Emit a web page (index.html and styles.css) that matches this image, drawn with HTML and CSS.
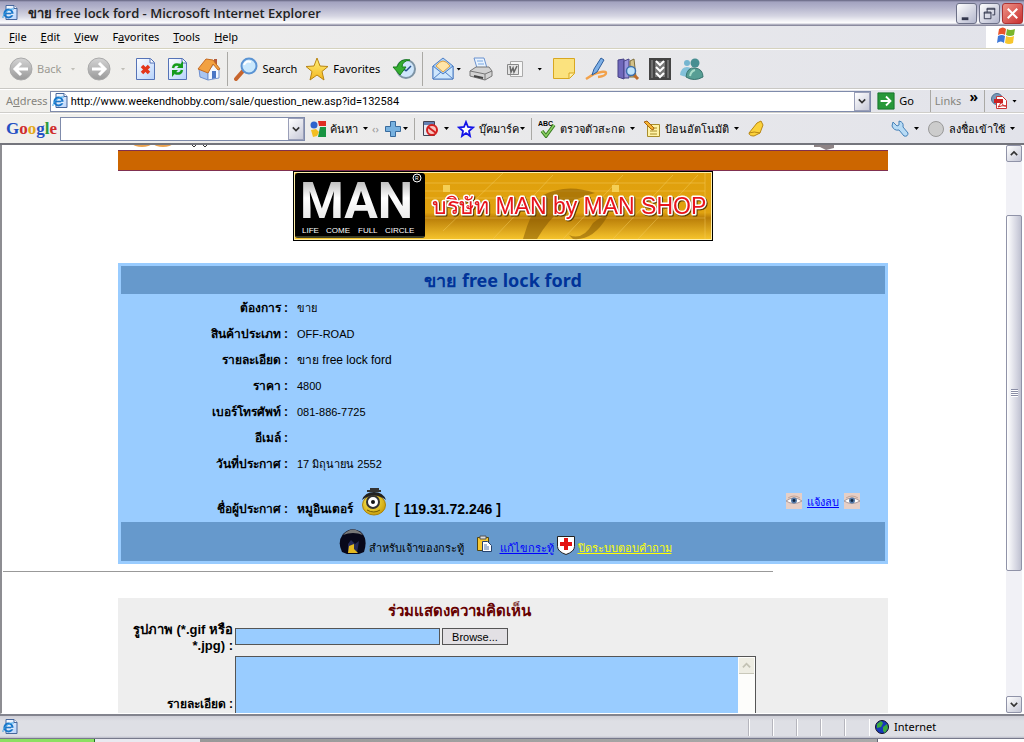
FILE: index.html
```html
<!DOCTYPE html>
<html lang="th">
<head>
<meta charset="utf-8">
<title>ขาย free lock ford</title>
<link rel="stylesheet" href="styles.css">
</head>
<body>
<svg class="defs" aria-hidden="true">
  <defs>
    <linearGradient id="gGrey" x1="0" y1="0" x2="0" y2="1"><stop offset="0" stop-color="#d4d4d4"/><stop offset="1" stop-color="#999"/></linearGradient>
    <linearGradient id="gPage" x1="0" y1="0" x2="1" y2="1"><stop offset="0" stop-color="#fff"/><stop offset="1" stop-color="#b5d2fb"/></linearGradient>
    <linearGradient id="gGold" x1="0" y1="0" x2="0" y2="1"><stop offset="0" stop-color="#fff27a"/><stop offset="1" stop-color="#f3b61e"/></linearGradient>
    <linearGradient id="gMetal" x1="0" y1="0" x2="0" y2="1"><stop offset="0" stop-color="#999"/><stop offset=".45" stop-color="#fff"/><stop offset="1" stop-color="#ddd"/></linearGradient>
    <linearGradient id="gAmber" x1="0" y1="0" x2="0" y2="1"><stop offset="0" stop-color="#e0a00c"/><stop offset=".6" stop-color="#e0a210"/><stop offset=".68" stop-color="#b97d08"/><stop offset="1" stop-color="#f5c32c"/></linearGradient>
    <radialGradient id="gBall" cx=".4" cy=".35" r=".7"><stop offset="0" stop-color="#fff35a"/><stop offset="1" stop-color="#c89b08"/></radialGradient>
    <symbol id="iePage" viewBox="0 0 16 16"><path d="M4 .5h8l3 3v11H4z" fill="url(#gPage)" stroke="#47679c"/><path d="M12 .5v3h3" fill="#fff" stroke="#47679c"/><circle cx="6.500" cy="8.500" r="4" fill="none" stroke="#1976c9" stroke-width="2.200"/><path d="M3 8.500h7" stroke="#1976c9" stroke-width="1.600"/><path d="M9 9.500h3" stroke="#dfecfc" stroke-width="1.500"/><path d="M1 13C0 10 7 3 12 4" fill="none" stroke="#39a3e8"/></symbol>
    <symbol id="eye" viewBox="0 0 16 16"><path d="M0 0h16v16H0z" fill="#e6cfc6"/><path d="M2 5Q8 1 14 5" fill="none" stroke="#c3a497"/><path d="M0 8Q8 2 16 8Q8 13 0 8" fill="#fff" stroke="#a9989a"/><circle cx="8" cy="7.500" r="3" fill="#557ba9"/><circle cx="8" cy="7.500" r="1.400" fill="#102540"/></symbol>
  </defs>
</svg>
<div class="window">
  <header class="titlebar">
    <svg class="i16" viewBox="0 0 16 16"><use href="#iePage"/></svg>
    <h1 class="caption">ขาย free lock ford - Microsoft Internet Explorer</h1>
    <button class="winbtn" aria-label="Minimize"><svg viewBox="0 0 20 20"><path d="M5 14h7v3H5z" fill="#34384e"/></svg></button>
    <button class="winbtn" aria-label="Restore"><svg viewBox="0 0 20 20"><path d="M7.500 9V4.500h8v7H13M7 5.500h9" fill="none" stroke="#34384e"/><path d="M4.500 8.500h7v7h-7zM4 9.500h8" fill="none" stroke="#34384e"/></svg></button>
    <button class="winbtn close" aria-label="Close"><svg viewBox="0 0 20 20"><path d="M5 5l10 10M15 5L5 15" stroke="#fff" stroke-width="2.200"/></svg></button>
  </header>
  <nav class="menubar">
    <div class="menus">
      <button><u>F</u>ile</button><button><u>E</u>dit</button><button><u>V</u>iew</button><button>F<u>a</u>vorites</button><button><u>T</u>ools</button><button><u>H</u>elp</button>
    </div>
    <div class="flag"><svg class="i20" viewBox="0 0 20 20"><path d="M3 3q4-3 7 0l-1 6q-3-2-7 0z" fill="#e8542a"/><path d="M11 3q3 2 8 0l-1 6q-4 2-8 0z" fill="#79b52c"/><path d="M2 10q4-2 7 0l-1 7q-3-3-7 0z" fill="#3d78d8"/><path d="M10 10q4 2 8 0l-1 7q-4 2-8 0z" fill="#f7c62b"/></svg></div>
  </nav>
  <div class="toolbar">
    <button class="tool dim"><svg class="i24" viewBox="0 0 24 24"><circle cx="12" cy="12" r="11" fill="url(#gGrey)" stroke="#aaa"/><path d="M19 12H7M12 6l-6 6 6 6" fill="none" stroke="#fff" stroke-width="3"/></svg>Back</button><i class="arrow pale"></i>
    <button class="tool dim s12" aria-label="Forward"><svg class="i24" viewBox="0 0 24 24"><circle cx="12" cy="12" r="11" fill="url(#gGrey)" stroke="#aaa"/><path d="M5 12h12M12 6l6 6-6 6" fill="none" stroke="#fff" stroke-width="3"/></svg></button><i class="arrow pale"></i>
    <button class="tool s8" aria-label="Stop"><svg class="i24" viewBox="0 0 24 24"><path d="M3.500 1.500h14l4 4v17h-18z" fill="url(#gPage)" stroke="#5573b7"/><path d="M17 2v4h4" fill="#fff" stroke="#5573b7"/><path d="M9 9l7 7M16 9l-7 7" stroke="#e3361b" stroke-width="3.500"/></svg></button>
    <button class="tool s8" aria-label="Refresh"><svg class="i24" viewBox="0 0 24 24"><path d="M3.500 1.500h14l4 4v17h-18z" fill="url(#gPage)" stroke="#5573b7"/><path d="M17 2v4h4" fill="#fff" stroke="#5573b7"/><path d="M8 11q1-5 7-3" fill="none" stroke="#149c1c" stroke-width="2.500"/><path d="M18 4v7h-6z" fill="#149c1c"/><path d="M17 13q-1 5-7 3" fill="none" stroke="#149c1c" stroke-width="2.500"/><path d="M7 20v-7h6z" fill="#149c1c"/></svg></button>
    <button class="tool s8" aria-label="Home"><svg class="i24" viewBox="0 0 24 24"><path d="M17 2h3v6h-3z" fill="#b35a3b"/><path d="M2 12l9 3v8l-8-3z" fill="#a9c5f2" stroke="#6d8fd0"/><path d="M11 14l6-7 5 5v9l-11 2z" fill="#f2f7ff" stroke="#7594cf"/><path d="M1 12L9 2l7 1 7 9-2 1-5-6-5 9z" fill="#f2a141" stroke="#c66b22"/><path d="M15 14h4v7l-4 1z" fill="#4975c5"/></svg></button>
    <i class="sep"></i>
    <button class="tool"><svg class="i24" viewBox="0 0 24 24"><path d="M9 14l-7 8" stroke="#c7652d" stroke-width="4" stroke-linecap="round"/><circle cx="15" cy="9" r="7.500" fill="#c9e8fd" stroke="#5a93d3" stroke-width="2"/><path d="M10 8q2-5 7-3" fill="none" stroke="#fff" stroke-width="2"/></svg>Search</button>
    <button class="tool s8"><svg class="i24" viewBox="0 0 24 24"><path d="M12 1l3 8 8 .5-6 5 2 8.500-7-5-7 5 2-8.500-6-5L9 9z" fill="url(#gGold)" stroke="#b98512"/></svg>Favorites</button>
    <button class="tool s12" aria-label="History"><svg class="i24" viewBox="0 0 24 24"><circle cx="14" cy="12" r="9" fill="#cfe6fb" stroke="#7e94a5" stroke-width="2"/><path d="M14 14l5-5M14 14l-3-3" stroke="#234d8a" stroke-width="1.500"/><path d="M1 10h4q3-9 13-7-8 1-8 7h4l-6 8z" fill="#36ae32" stroke="#178019"/></svg></button>
    <i class="sep"></i>
    <button class="tool s2" aria-label="Mail"><svg class="i24" viewBox="0 0 24 24"><path d="M2 9L12 1l10 8v13H2z" fill="#a8d0f8" stroke="#4f7fc4"/><path d="M5 9q7-10 14 0l-7 6z" fill="#ffe5a8" stroke="#e0a143"/><path d="M2 9l10 8 10-8v13H2z" fill="#cfe7fd" stroke="#4f7fc4"/><path d="M2 22l8-7M22 22l-8-7" stroke="#4f7fc4"/></svg></button><i class="arrow tight"></i>
    <button class="tool s8" aria-label="Print"><svg class="i24" viewBox="0 0 24 24"><path d="M5 1h10l3 10H8z" fill="#e8f3ff" stroke="#6a92cf"/><path d="M8 4h6M9 7h6" stroke="#7ba7df"/><path d="M1 14l6-4h13l3 4v5l-7 4-15-4z" fill="#d2d2d2" stroke="#777"/><path d="M1 14l15 3 7-3M16 17v6" fill="none" stroke="#777"/><path d="M5 19l9 2" stroke="#444" stroke-width="2"/></svg></button>
    <button class="tool s12 word" aria-label="Edit with Word"><svg class="i20" viewBox="0 0 20 20"><path d="M5.500 2.500h12v15h-12z" fill="#f6f6f6" stroke="#aaa"/><path d="M2.500 5.500h11v10h-11z" fill="#e4e4e4" stroke="#888"/><path d="M5 7l1 6 2-4 1 4 3-6" fill="none" stroke="#666" stroke-width="1.500"/></svg></button><i class="arrow"></i>
    <button class="tool s10" aria-label="Note"><svg class="i24" viewBox="0 0 24 24"><path d="M1.500 1.500h21v15l-5 5h-16z" fill="#fbe27e" stroke="#d8a720"/><path d="M22 16h-5v5" fill="#fff0ae" stroke="#d8a720"/></svg></button>
    <button class="tool s8" aria-label="Draw"><svg class="i24" viewBox="0 0 24 24"><path d="M2 22l8-5q12-4 12-1t-8 4" fill="none" stroke="#f2a24c" stroke-width="2.500"/><path d="M8 18l2-6 7-11 3 2-7 12z" fill="#7dafe6" stroke="#2f5f9e"/></svg></button>
    <button class="tool s8" aria-label="Research"><svg class="i24" viewBox="0 0 24 24"><path d="M2 3l6-1v20l-6-2z" fill="#6f68bb" stroke="#464085"/><path d="M8 4l5-2v19H8z" fill="#9a95dc" stroke="#464085"/><path d="M14 4l4-2 2 18h-6z" fill="#d4c28a" stroke="#7c6c3a"/><path d="M17 17l5 5" stroke="#bd6b2a" stroke-width="3"/><circle cx="15" cy="14" r="4.500" fill="#bfe3fb" stroke="#3c6fae" stroke-width="1.500"/></svg></button>
    <button class="tool s8" aria-label="Downloads"><svg class="i24" viewBox="0 0 24 24"><path d="M1 1h22v22H1z" fill="#444"/><path d="M4 3v18M20 3v18" stroke="#999"/><path d="M7 4h10v16H7z" fill="#777"/><path d="M8 4l4 4 4-4M8 10l4 4 4-4M8 16l4 4 4-4" fill="none" stroke="#fff" stroke-width="2"/></svg></button>
    <button class="tool s8" aria-label="Messenger"><svg class="i24" viewBox="0 0 24 24"><circle cx="7" cy="6" r="3" fill="#75b5d0"/><path d="M0 18q1-8 7-8t5 9q-6 2-12-1" fill="#83c1da"/><circle cx="15" cy="6" r="4.500" fill="#478e91"/><path d="M6 20q1-10 9-9t8 9q-9 5-17 0" fill="#579e94" stroke="#38746f"/><path d="M10 19q1-5 5-6" stroke="#a8ddca" stroke-width="2" fill="none"/></svg></button>
  </div>
  <div class="addressbar">
    <label for="url">A<u>d</u>dress</label>
    <div class="combo url">
      <svg class="i16" viewBox="0 0 16 16"><use href="#iePage"/></svg>
      <input id="url" type="text" value="http://www.weekendhobby.com/sale/question_new.asp?id=132584">
      <button class="drop" aria-label="Show addresses"><svg viewBox="0 0 10 10"><path d="M1 3l4 4 4-4" fill="none" stroke="#333" stroke-width="2"/></svg></button>
    </div>
    <button class="tool"><svg class="i18" viewBox="0 0 20 20"><path d="M1 1h18v18H1z" fill="#28983a" stroke="#15702a"/><path d="M4 10h11M10 5l5 5-5 5" fill="none" stroke="#fff" stroke-width="2"/></svg>Go</button>
    <i class="sep first"></i>
    <span class="links">Links</span><b class="more">»</b>
    <i class="sep"></i>
    <button class="tool" aria-label="PDF"><svg class="i16" viewBox="0 0 16 16"><circle cx="6" cy="6" r="5.500" fill="#7798b8" stroke="#506f90"/><path d="M5.500 3.500h6l4 4v8h-10z" fill="#fff" stroke="#c33"/><path d="M3 6h9v4H3z" fill="#c22"/><path d="M7 14q3-3 3-6 1 5 5 5-4-1-8 1" fill="none" stroke="#c22"/></svg></button><i class="arrow"></i>
  </div>
  <div class="googlebar">
    <span class="glogo"><b class="gb">G</b><b class="gr">o</b><b class="gy">o</b><b class="gb">g</b><b class="gg">l</b><b class="gr">e</b></span>
    <div class="combo gsearch">
      <input type="text" aria-label="Google">
      <button class="drop" aria-label="Search history"><svg viewBox="0 0 10 10"><path d="M1 3l4 4 4-4" fill="none" stroke="#333" stroke-width="2"/></svg></button>
    </div>
    <button class="tool"><svg class="i16" viewBox="0 0 16 16"><path d="M8 0h8v5H9z" fill="#e02d22"/><path d="M10 6h6v10H8z" fill="#189442"/><circle cx="4" cy="4" r="3.500" fill="#2f62cd"/><path d="M1 9l5-1 3 3-2 4-4 1z" fill="#f3be20"/></svg>ค้นหา</button><i class="arrow"></i>
    <span class="grip">‹›</span>
    <button class="tool" aria-label="Add"><svg class="i18" viewBox="0 0 18 18"><path d="M6.500 1.500h5v5h5v5h-5v5h-5v-5h-5v-5h5z" fill="#78b2e0" stroke="#386b9d"/></svg></button><i class="arrow tight"></i>
    <i class="sep"></i>
    <button class="tool" aria-label="Popup blocker"><svg class="i18" viewBox="0 0 18 18"><path d="M2.500 1.500h11v14h-11z" fill="#e6eaf3" stroke="#445"/><path d="M3 2h10v3H3z" fill="#6581b4"/><circle cx="11" cy="10" r="5" fill="#f7c6c0" stroke="#d32020" stroke-width="2"/><path d="M7 7l8 6" stroke="#d32020" stroke-width="2"/></svg></button><i class="arrow"></i>
    <button class="tool s8"><svg class="i18" viewBox="0 0 18 18"><path d="M9 2l2 5 5 .5-4 3.500 1 5-4-3-4 3 1-5-4-3.500L7 7z" fill="#fff" stroke="#1414e8" stroke-width="1.800"/></svg>บุ๊คมาร์ค</button><i class="arrow tight"></i>
    <i class="sep"></i>
    <button class="tool"><svg class="i18" viewBox="0 0 18 18"><text x="0" y="6" class="abc">ABC</text><path d="M4 11l4 5 8-11" fill="none" stroke="#397c22" stroke-width="3.500"/><path d="M4 11l4 5 8-11" fill="none" stroke="#8ace63" stroke-width="1.500"/></svg>ตรวจตัวสะกด</button><i class="arrow"></i>
    <button class="tool s8"><svg class="i18" viewBox="0 0 18 18"><path d="M4.500 4.500h12v12h-12z" fill="#fff3a6" stroke="#a88d2c"/><path d="M7 8h7M7 11h7M7 14h7" stroke="#a88d2c"/><path d="M1 2l3-1 7 7-1 2-2-1z" fill="#f6b532" stroke="#a36112"/></svg>ป้อนอัตโนมัติ</button><i class="arrow"></i>
    <button class="tool s8" aria-label="Highlight"><svg class="i18" viewBox="0 0 18 18"><path d="M2 13l8-10 4-2 2 4-3 8-6 3q-5 0-5-3" fill="#fbd23c" stroke="#b98713"/><path d="M2 13q5-2 11 0" fill="none" stroke="#b98713"/></svg></button>
    <span class="grow"></span>
    <button class="tool" aria-label="Settings"><svg class="i18" viewBox="0 0 18 18"><path d="M2 2l4 4 2-1 0-4q5 1 4 6l5 6q0 4-4 3L8 10q-5 1-7-4z" fill="#b8dbf5" stroke="#4380b8"/></svg></button><i class="arrow"></i>
    <button class="tool s8"><svg class="i18" viewBox="0 0 18 18"><circle cx="9" cy="9" r="7.500" fill="#ccc" stroke="#999"/></svg>ลงชื่อเข้าใช้</button><i class="arrow"></i>
  </div>

  <div class="viewport">
    <main class="page">
      <div class="remnant">
        <svg class="logos" viewBox="0 0 90 4"><ellipse cx="24" cy="-1" rx="9" ry="3" fill="#eda44f"/><ellipse cx="45" cy="-1" rx="9" ry="3" fill="#eda44f"/><path d="M74 0l2 2 2-2M85 0l2 2 2-2" fill="none" stroke="#333"/></svg>
        <svg class="scrap" viewBox="0 0 20 5"><path d="M0 0h20v3l-8 2-6-3H0z" fill="#8d8385"/></svg>
      </div>
      <div class="band"></div>
      <svg class="banner" viewBox="0 0 420 70" role="img">
        <path d="M0 0h420v70H0z"/><path d="M1 1h418v68H1z" fill="#ffefa8"/><path d="M2 2h416v66H2z" fill="url(#gAmber)"/>
        <g fill="none" stroke="#f4cf62" stroke-opacity=".45"><path d="M132 12h280M132 20h280M132 27h280M132 47h280M150 60l60-58M200 68l60-64M270 68l60-64M320 68l60-64M345 68l60-64M412 2v66"/></g>
        <path d="M150 14h7v7h-7zM319 14h7v7h-7z" fill="#f5cf55"/>
        <path d="M250 24q24-12 52-2-36 8-58 46h-14q8-28 20-44M276 64q14 6 24-12 10-8 14-6-14 24-34 22z" fill="#7d5200" fill-opacity=".5"/>
        <rect x="2" y="2" width="130" height="65" rx="3" fill="#000"/><path d="M3 66h128" stroke="#777c50"/>
        <text x="7" y="47" class="man">MAN</text>
        <circle cx="124" cy="7" r="4" fill="none" stroke="#fff"/><text x="122" y="9" class="reg">R</text>
        <text x="9" y="62" class="life">LIFE</text><text x="33" y="62" class="life">COME</text><text x="65" y="62" class="life">FULL</text><text x="92" y="62" class="life">CIRCLE</text>
        <text x="139" y="43" class="shop">บริษัท MAN by MAN SHOP</text>
      </svg>
      <table class="detail">
        <colgroup><col class="c-label"><col><col class="c-report"></colgroup>
        <thead><tr><th colspan="3">ขาย free lock ford</th></tr></thead>
        <tbody>
          <tr><th scope="row">ต้องการ :</th><td colspan="2">ขาย</td></tr>
          <tr><th scope="row">สินค้าประเภท :</th><td colspan="2">OFF-ROAD</td></tr>
          <tr><th scope="row">รายละเอียด :</th><td colspan="2" class="wide">ขาย free lock ford</td></tr>
          <tr><th scope="row">ราคา :</th><td colspan="2">4800</td></tr>
          <tr><th scope="row">เบอร์โทรศัพท์ :</th><td colspan="2">081-886-7725</td></tr>
          <tr><th scope="row">อีเมล์ :</th><td colspan="2"></td></tr>
          <tr><th scope="row">วันที่ประกาศ :</th><td colspan="2">17 มิถุนายน 2552</td></tr>
          <tr class="poster"><th scope="row">ชื่อผู้ประกาศ :</th>
            <td><div class="line name"><b class="who">หมูอินเตอร์</b><svg class="smile" viewBox="0 0 26 28"><ellipse cx="13" cy="17" rx="11.500" ry="10" fill="url(#gBall)" stroke="#ad8307"/><path d="M1 12q12-9 24 0-3-8-12-8T1 12" fill="#222"/><path d="M6 3h14M9 1h9" stroke="#333" stroke-width="2"/><circle cx="12" cy="14" r="6" fill="#fff" stroke="#333" stroke-width="2"/><circle cx="12" cy="14" r="2" fill="#111"/><path d="M6 22q7 4 13 0" fill="none" stroke="#735a02"/></svg><b class="ip">[ 119.31.72.246 ]</b></div></td>
            <td class="report"><div class="line"><svg class="i16" viewBox="0 0 16 16"><use href="#eye"/></svg><a href="#">แจ้งลบ</a><svg class="i16" viewBox="0 0 16 16"><use href="#eye"/></svg></div></td></tr>
        </tbody>
        <tfoot><tr><td colspan="3"><div class="line owner">
          <svg class="i28" viewBox="0 0 28 28"><path d="M3 25Q-2 15 4 7q9-9 19-1 6 7 2 19l-5 2H8z" fill="#08081a"/><path d="M4 8Q14-3 24 8q-10-4-20 0" fill="#777"/><path d="M9 26v-9l3-4 4 4 4-3-2 12z" fill="#252a55"/><path d="M10 19l5-2v5l4 4H9z" fill="#e4b91f"/></svg>
          <span>สำหรับเจ้าของกระทู้</span>
          <svg class="i18 clip" viewBox="0 0 18 18"><path d="M2.500 2.500h11v13h-11z" fill="#f7c832" stroke="#554610"/><path d="M5 1h6v3H5z" fill="#ddd" stroke="#555"/><path d="M7.500 6.500h5l4 4v6h-9z" fill="#fff" stroke="#25426f"/><path d="M9 10h3M9 12h5M9 14h5" stroke="#5479ae"/></svg>
          <a href="#">แก้ไขกระทู้</a>
          <svg class="i20" viewBox="0 0 20 20"><path d="M1.500 1.500h17v10q0 5-8.500 8Q1.500 16.500 1.500 11.500z" fill="#fff" stroke="#222"/><path d="M8 3h4v4h4v4h-4v4H8v-4H4V7h4z" fill="#e31212"/></svg>
          <a href="#" class="lock">ปิดระบบตอบคำถาม</a></div></td></tr></tfoot>
      </table>
      <hr>
      <form class="comment">
        <h2>ร่วมแสดงความคิดเห็น</h2>
        <label for="pic">รูปภาพ (*.gif หรือ *.jpg) :</label>
        <div class="file"><input id="pic" type="text"><button type="button">Browse...</button></div>
        <label for="msg" class="msg">รายละเอียด :</label>
        <div class="area"><textarea id="msg"></textarea><div class="rail"><i><svg viewBox="0 0 10 10"><path d="M1 7l4-4 4 4" fill="none" stroke="#c3c2b4" stroke-width="2"/></svg></i></div></div>
      </form>
    </main>
    <div class="scroll">
      <button aria-label="Scroll up"><svg viewBox="0 0 10 10"><path d="M1 7l4-4 4 4" fill="none" stroke="#333" stroke-width="2"/></svg></button>
      <div class="track"><div class="thumb"><i></i></div></div>
      <button aria-label="Scroll down"><svg viewBox="0 0 10 10"><path d="M1 3l4 4 4-4" fill="none" stroke="#333" stroke-width="2"/></svg></button>
    </div>
  </div>
  <footer class="status">
    <svg class="i16" viewBox="0 0 16 16"><use href="#iePage"/></svg>
    <span class="grow"></span><i></i><i></i><i></i><i></i><i></i>
    <span class="zone"><svg class="i14" viewBox="0 0 14 14"><circle cx="7" cy="7" r="6.500" fill="#1838b8" stroke="#112"/><path d="M2 4l4-3 2 2-2 4-4 1zM8 7l4-3 1 4-3 5-2-2z" fill="#3cab3c"/></svg>Internet</span>
  </footer>
  <div class="taskbar"><span class="start"></span><span class="strip"></span></div>
</div>
</body>
</html>
```

FILE: styles.css
```css
* { box-sizing: border-box; }
body {
  margin: 0;
  overflow: hidden;
  background: #e2e3ea;
  font: 11px/14px "Noto Sans", "Liberation Sans", sans-serif;
  color: #000;
}
button, input, textarea { font: inherit; color: inherit; margin: 0; padding: 0; border: 0; background: none; border-radius: 0; }
svg { display: block; flex: none; }
.defs { position: absolute; width: 0; height: 0; }
.i14 { width: 14px; height: 14px; }
.i16 { width: 16px; height: 16px; }
.i18 { width: 18px; height: 18px; }
.i20 { width: 20px; height: 20px; }
.i24 { width: 24px; height: 24px; }
.i28 { width: 28px; height: 28px; }
.grow { flex: 1; }
.window { display: flex; flex-direction: column; height: 100vh; }

.titlebar {
  display: flex; align-items: center; gap: 2px; height: 26px; padding: 0 1px 0 2px; flex: none;
  background: linear-gradient(#63637f 0, #a3a3c0 2px, #b2b2cb 7px, #d5d5e2 16px, #fff 23px, #c5c5d2 24px, #77778e 26px);
}
.caption { flex: 1; margin: 0 0 0 8px; font: 600 13px/20px "Open Sans", "Noto Sans", sans-serif; color: #222; }
.winbtn { width: 21px; height: 21px; border: 1px solid #6c7087; border-radius: 3px; background: linear-gradient(135deg, #fff, #b3b6cc); }
.winbtn svg { width: 19px; height: 19px; }
.winbtn.close { background: linear-gradient(135deg, #ee9488, #c92f2f); border-color: #a33; }

.menubar { display: flex; height: 23px; flex: none; border-bottom: 1px solid #d5d2be; background: linear-gradient(90deg, #f1f0ee, #e2e3ea); }
.menus { flex: 1; display: flex; gap: 14px; padding-left: 9px; }
.flag { width: 38px; padding-left: 10px; background: #fff; }

.toolbar, .addressbar, .googlebar { display: flex; align-items: center; flex: none; background: linear-gradient(90deg, #f1f0ec, #e2e3ea); }
.toolbar { height: 40px; padding-left: 9px; border-top: 1px solid #fff; border-bottom: 1px solid #c9c8c4; }
.tool { display: flex; align-items: center; gap: 4px; }
.dim { color: #9b9a93; }
.s2 { margin-left: 2px; }
.s8 { margin-left: 8px; }
.s10 { margin-left: 10px; }
.s12 { margin-left: 12px; }
.arrow { width: 5px; height: 3px; margin: 0 0 0 5px; background: #000; clip-path: polygon(0 0, 100% 0, 50% 100%); flex: none; }
.arrow.pale { margin-left: 9px; background: #c0bfb8; }
.arrow.tight { margin-left: 1px; }
.sep { width: 1px; height: 34px; margin-left: 6px; margin-right: 6px; background: #aaa9a5; flex: none; }
.word + .arrow { margin-left: 12px; }

.addressbar { height: 24px; padding: 0 7px 0 6px; border-top: 1px solid #fff; border-bottom: 1px solid #cfceca; }
.addressbar label, .links { color: #85847d; }
.addressbar .combo { flex: 1; margin: 0 6px 0 2px; }
.addressbar .sep, .googlebar .sep { height: 22px; }
.addressbar .first { margin: 0 4px 0 16px; }
.more { margin: -8px 0 0 8px; font-size: 14px; }
.combo { display: flex; align-items: center; height: 21px; border: 1px solid #7f8bab; background: #fff; }
.combo input { flex: 1; min-width: 0; outline: 0; height: 19px; }
.url { gap: 3px; padding-left: 1px; }
.url input { font-family: Roboto, sans-serif; }
.drop { width: 16px; height: 19px; padding: 3px; border: 1px solid #9a9fb8; background: linear-gradient(135deg, #fff, #c7c9d8); flex: none; }
.drop svg { width: 8px; height: 10px; }

.googlebar { height: 32px; padding: 0 9px 0 6px; border-top: 1px solid #fff; border-bottom: 2px solid #74757c; }
.glogo { width: 49px; margin-right: 5px; font: 17px/20px "Liberation Serif", serif; }
.glogo b { font-weight: 700; }
.gb { color: #2550c4; } .gr { color: #cf2c2c; } .gy { color: #e4a91a; } .gg { color: #2c9c3c; }
.gsearch { width: 245px; height: 24px; margin-right: 5px; }
.gsearch .drop { height: 22px; }
.grip { width: 12px; margin-left: 4px; color: #999; }
.abc { font: 700 7px "Liberation Sans", sans-serif; }

.viewport { flex: 1; min-height: 0; display: flex; background: #fff; border-left: 2px solid #8d8d92; border-bottom: 1px solid #fff; padding-right: 2px; }
.page { flex: 1; min-width: 0; overflow: hidden; padding-right: 2px; font-family: "Liberation Sans", sans-serif; font-size: 11px; }
.remnant, .band, .detail, .comment { width: 770px; max-width: 100%; margin: 0 auto; }
.remnant { display: flex; justify-content: space-between; height: 5px; padding-right: 54px; }
.logos { width: 90px; height: 4px; }
.scrap { width: 20px; height: 5px; }
.band { height: 21px; background: #cc6600; border: 1px solid #803050; border-width: 1px 0; }
.banner { width: 420px; height: 70px; margin: 0 auto 22px; }
.man { font: 700 50px Roboto, sans-serif; fill: url(#gMetal); }
.life { font: 400 8px "Liberation Sans", sans-serif; fill: #fff; }
.reg { font: 5px "Liberation Sans", sans-serif; fill: #fff; }
.shop { font: 23px "Liberation Sans", sans-serif; fill: #e8141c; stroke: #fff; stroke-width: 3px; paint-order: stroke; stroke-linejoin: round; filter: drop-shadow(1px 1px 0 #5a3c00); }

.detail { border: 3px solid #99ccff; background: #99ccff; border-collapse: separate; border-spacing: 0; table-layout: fixed; }
.c-label { width: 167px; }
.c-report { width: 108px; }
.detail td, .detail th { padding: 2px 0 0 9px; height: 26px; }
.detail tbody th { padding-left: 0; text-align: right; font-weight: 700; font-size: 12px; }
.detail thead th { height: 28px; padding: 0; background: #6699cc; color: #003399; font: 700 18px/24px "Noto Sans", sans-serif; }
.detail .wide { font-size: 12px; }
.detail .poster > * { height: 46px; vertical-align: bottom; padding-bottom: 6px; }
.line { display: flex; align-items: flex-end; gap: 5px; }
.name { gap: 8px; }
.who { font-size: 12px; }
.smile { width: 26px; height: 28px; }
.ip { font-size: 14px; }
.detail .poster .report { padding-bottom: 13px; }
.detail a { color: #0000ff; }
.detail tfoot td { height: 39px; padding: 0; background: #6699cc; vertical-align: top; }
.owner { justify-content: center; padding: 5px 0 0 4px; gap: 2px; }
.clip { margin: 0 5px 2px 9px; }
.detail .lock { color: #ffff00; }
hr { width: 770px; max-width: 100%; height: 1px; margin: 7px 0 26px 1px; border: 0; background: #999; }
.comment { display: grid; grid-template-columns: 115px 1fr; column-gap: 2px; background: #eee; }
.comment h2 { grid-column: 1 / -1; margin: 0; padding-right: 88px; text-align: center; font: 700 15px/24px "Noto Sans", sans-serif; color: #660000; }
.comment label { text-align: right; font-weight: 700; font-size: 13px; line-height: 16px; }
.file { display: flex; gap: 2px; align-items: flex-start; padding: 6px 0 11px; }
.file input { width: 205px; height: 17px; border: 1px solid #555; background: #99ccff; }
.file button { width: 66px; height: 17px; border: 1px solid #555; background: #e2e0e4; }
.comment .msg { padding-top: 40px; font-size: 12px; }
.area { display: flex; width: 521px; height: 100px; border: 1px solid #555; }
.area textarea { flex: 1; resize: none; background: #99ccff; }
.rail { width: 17px; padding: 1px; background: #fdfdfb; }
.rail i { display: block; height: 16px; padding: 3px; background: #eeede3; border-bottom: 1px solid #c9c8ba; }
.scroll { display: flex; flex-direction: column; width: 16px; background: #f1f1f6; }
.scroll button { height: 17px; border: 1px solid #9093a8; border-radius: 2px; padding: 3px; background: linear-gradient(135deg, #fff, #c5c7d6); }
.scroll button svg { width: 8px; height: 9px; }
.track { flex: 1; padding-top: 53px; }
.thumb { height: 356px; display: grid; place-items: center; border: 1px solid #9093a8; border-radius: 2px; background: linear-gradient(90deg, #fff, #d3d4e0 70%, #bfc1d0); }
.thumb i { width: 7px; height: 8px; background: repeating-linear-gradient(#8b8ea5 0 1px, #fff 1px 2px); }
.status { display: flex; align-items: center; flex: none; height: 24px; padding-left: 2px; border-top: 2px solid #83848e; background: linear-gradient(#cfcfd7, #dedfe5 5px, #dedfe5 20px, #b9bac6); }
.status > i { width: 24px; height: 17px; border-left: 1px solid #fff; box-shadow: -1px 0 #b5b5bd; }
.zone { display: flex; align-items: center; gap: 5px; width: 155px; height: 17px; padding-left: 5px; border-left: 1px solid #fff; }
.taskbar { display: flex; flex: none; height: 4px; border-top: 1px solid #77798c; background: #fff; }
.start { width: 95px; background: #8bdf62; border-right: 1px solid #207020; }
.strip { width: 783px; border-right: 1px solid #667; background: linear-gradient(90deg, #e9e9f0 105px, #999 105px, #aaa); }
```
